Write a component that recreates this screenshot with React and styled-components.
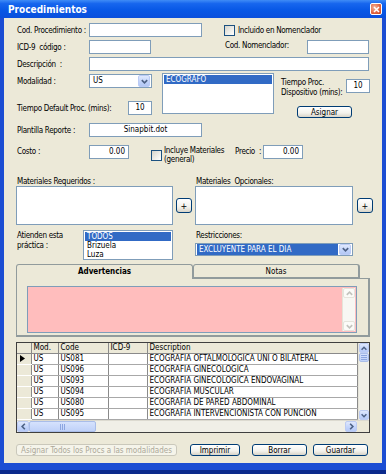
import React from "react";
import styled, { createGlobalStyle } from "styled-components";

const FONT = `"DejaVu Sans Condensed", "Liberation Sans", sans-serif`;

const GlobalStyle = createGlobalStyle`
  * { box-sizing: border-box; }
  html, body { margin: 0; padding: 0; background: #0b2a8c; }
  body { font-family: ${FONT}; font-size: 8px; color: #000; }
`;

const rows = [
  { mod: "US", code: "US081", icd: "", desc: "ECOGRAFIA OFTALMOLOGICA UNI O BILATERAL", current: true },
  { mod: "US", code: "US096", icd: "", desc: "ECOGRAFIA GINECOLOGICA" },
  { mod: "US", code: "US093", icd: "", desc: "ECOGRAFIA GINECOLOGICA ENDOVAGINAL" },
  { mod: "US", code: "US094", icd: "", desc: "ECOGRAFIA MUSCULAR" },
  { mod: "US", code: "US080", icd: "", desc: "ECOGRAFIA DE PARED ABDOMINAL" },
  { mod: "US", code: "US095", icd: "", desc: "ECOGRAFIA INTERVENCIONISTA CON PUNCION" },
];

function Chevron({ dir = "down", color = "#4d6185" }) {
  const d = {
    down: "M2 3.5 L5 6.5 L8 3.5",
    up: "M2 6.5 L5 3.5 L8 6.5",
    left: "M6.5 2 L3.5 5 L6.5 8",
    right: "M3.5 2 L6.5 5 L3.5 8",
  }[dir];
  return (
    <svg width="9" height="9" viewBox="0 0 10 10">
      <path d={d} fill="none" stroke={color} strokeWidth="1.8" />
    </svg>
  );
}

function Grip({ vertical }) {
  return vertical ? (
    <svg width="6" height="5" viewBox="0 0 6 5">
      <path d="M0 0.5 H6 M0 2.5 H6 M0 4.5 H6" stroke="#8ca5e0" strokeWidth="1" />
    </svg>
  ) : (
    <svg width="5" height="6" viewBox="0 0 5 6">
      <path d="M0.5 0 V6 M2.5 0 V6 M4.5 0 V6" stroke="#8ca5e0" strokeWidth="1" />
    </svg>
  );
}

function App() {
  return (
    <>
      <GlobalStyle />
      <Window>
        <TitleBar>
          <span>Procedimientos</span>
          <CloseBtn>
            <svg width="7" height="7" viewBox="0 0 7 7">
              <path d="M1 1 L6 6 M6 1 L1 6" stroke="#fff" strokeWidth="1.5" />
            </svg>
          </CloseBtn>
        </TitleBar>

        <Body>
          <Row>
            <Label $w={73}>Cod. Procedimiento :</Label>
            <Field $w={113} />
            <Check $ml={22} />
            <Label $ml={2}>Incluido en Nomenclador</Label>
          </Row>

          <Row $mt={3}>
            <Label $w={73}>ICD-9&nbsp; código :</Label>
            <Field $w={62} />
            <Label $w={83} $ml={73} $dy={-2}>Cod. Nomenclador:</Label>
            <Field $w={62} />
          </Row>

          <Row $mt={3}>
            <Label $w={73}>Descripción&nbsp; :</Label>
            <Field $w={280} />
          </Row>

          <Block>
            <LeftCol>
              <Row $mt={1}>
                <Label $w={73}>Modalidad :</Label>
                <Select $w={63}>
                  <span>US</span>
                  <DropBtn><Chevron /></DropBtn>
                </Select>
              </Row>
              <Row $mt={13}>
                <Label $w={112}>Tiempo Default Proc. (mins):</Label>
                <Field $w={24} $align="center">10</Field>
              </Row>
            </LeftCol>

            <ListBox $w={112} $h={41}>
              <ListItem $selected>ECOGRAFO</ListItem>
            </ListBox>

            <RightCol>
              <Row $align="flex-start" $mt={5}>
                <TwoLine $w={66}>Tiempo Proc.<br />Dispositivo (mins):</TwoLine>
                <Field $w={24} $align="center" $mt={1}>10</Field>
              </Row>
              <Button $w={55} $ml={17} $mt={8}>Asignar</Button>
            </RightCol>
          </Block>

          <Row $mt={5}>
            <Label $w={73}>Plantilla Reporte :</Label>
            <Field $w={113} $align="center">Sinapbit.dot</Field>
          </Row>

          <Row $mt={8} $align="flex-start">
            <Label $w={73} $h={14}>Costo :</Label>
            <Field $w={40} $align="right">0.00</Field>
            <Check $ml={22} $mt={5} />
            <TwoLine $w={71} $ml={1} $mt={1} $lh={9}>Incluye Materiales<br />(general)</TwoLine>
            <Label $w={29} $h={14}>Precio&nbsp; :</Label>
            <Field $w={40} $align="right">0.00</Field>
          </Row>

          <Row $mt={12} $h={10}>
            <Label $w={179}>Materiales Requeridos :</Label>
            <Label>Materiales&nbsp; Opcionales:</Label>
          </Row>

          <Row>
            <TextArea $w={157} $h={39} />
            <PlusButton $ml={3}>+</PlusButton>
            <TextArea $w={158} $h={39} $ml={3} />
            <PlusButton $ml={4}>+</PlusButton>
          </Row>

          <Row $mt={5} $align="flex-start">
            <TwoLine $w={67} $mt={1}>Atienden esta<br />práctica :</TwoLine>
            <ListBox $w={90} $h={30}>
              <ListItem $selected>TODOS</ListItem>
              <ListItem>Brizuela</ListItem>
              <ListItem>Luza</ListItem>
            </ListBox>
            <RestrictCol>
              <Label $h={11}>Restricciones:</Label>
              <Select $w={158} $h={13} $mt={2} $active>
                <span>EXCLUYENTE PARA EL DIA</span>
                <DropBtn $h={11}><Chevron /></DropBtn>
              </Select>
            </RestrictCol>
          </Row>

          <Tabs>
            <TabStrip>
              <Tab $w={177} $active>Advertencias</Tab>
              <Tab $w={167}>Notas</Tab>
            </TabStrip>
            <TabPanel>
              <PinkArea>
                <VScroll $disabled>
                  <ScrollBtn $disabled><Chevron dir="up" color="#c3c3bd" /></ScrollBtn>
                  <ScrollBtn $disabled><Chevron dir="down" color="#c3c3bd" /></ScrollBtn>
                </VScroll>
              </PinkArea>
            </TabPanel>
          </Tabs>

          <GridBox>
            <GridMain>
              <Table>
                <colgroup>
                  <col style={{ width: 14 }} />
                  <col style={{ width: 27 }} />
                  <col style={{ width: 50 }} />
                  <col style={{ width: 39 }} />
                  <col />
                </colgroup>
                <thead>
                  <tr>
                    <Th />
                    <Th>Mod.</Th>
                    <Th>Code</Th>
                    <Th>ICD-9</Th>
                    <Th>Description</Th>
                  </tr>
                </thead>
                <tbody>
                  {rows.map((r) => (
                    <tr key={r.code}>
                      <Indicator>
                        {r.current && (
                          <svg width="5" height="7" viewBox="0 0 5 7">
                            <path d="M0 0 L5 3.5 L0 7 Z" fill="#000" />
                          </svg>
                        )}
                      </Indicator>
                      <Td>{r.mod}</Td>
                      <Td>{r.code}</Td>
                      <Td>{r.icd}</Td>
                      <Td>{r.desc}</Td>
                    </tr>
                  ))}
                </tbody>
              </Table>
              <VScroll>
                <ScrollBtn><Chevron dir="up" /></ScrollBtn>
                <Thumb $v><Grip vertical /></Thumb>
                <Track />
                <ScrollBtn><Chevron dir="down" /></ScrollBtn>
              </VScroll>
            </GridMain>
            <HScroll>
              <ScrollBtn $h><Chevron dir="left" /></ScrollBtn>
              <Thumb $w={67}><Grip /></Thumb>
              <Track />
              <ScrollBtn $h><Chevron dir="right" /></ScrollBtn>
              <Corner />
            </HScroll>
          </GridBox>

          <Row $mt={11}>
            <Button $w={161} $disabled>Asignar Todos los Procs a las modalidades</Button>
            <Button $w={50} $ml={13}>Imprimir</Button>
            <Button $w={55} $ml={12}>Borrar</Button>
            <Button $w={55} $ml={6}>Guardar</Button>
          </Row>
        </Body>
      </Window>
    </>
  );
}

// ---- window frame ----
const Window = styled.div`
  width: 386px;
  height: 470px;
  display: flex;
  flex-direction: column;
`;

const TitleBar = styled.div`
  height: 18px;
  flex: none;
  display: flex;
  align-items: center;
  justify-content: space-between;
  padding: 0 4px 0 8px;
  color: #fff;
  font-weight: bold;
  font-size: 10px;
  background: linear-gradient(
    to bottom,
    #3f8cf6 0%,
    #1766ee 20%,
    #0858e6 55%,
    #0a4fdc 100%
  );
`;

const CloseBtn = styled.div`
  width: 12px;
  height: 12px;
  border: 1px solid #fff;
  border-radius: 2px;
  display: flex;
  align-items: center;
  justify-content: center;
  background: radial-gradient(circle at 35% 35%, #f3b49c, #e0633f 60%, #c64420);
`;

const Body = styled.div`
  flex: 1;
  display: flex;
  flex-direction: column;
  padding: 5px 0 0 12px;
  background: #ece9d8;
  border: solid #1b4dd3;
  border-width: 0 4px 7px 4px;
`;

// ---- generic form parts ----
const Row = styled.div`
  display: flex;
  align-items: ${(p) => p.$align || "center"};
  margin-top: ${(p) => p.$mt || 0}px;
  height: ${(p) => (p.$h ? `${p.$h}px` : "auto")};
`;

const Label = styled.span`
  flex: none;
  width: ${(p) => (p.$w ? `${p.$w}px` : "auto")};
  height: ${(p) => (p.$h ? `${p.$h}px` : "auto")};
  line-height: ${(p) => (p.$h ? `${p.$h}px` : "normal")};
  margin-left: ${(p) => p.$ml || 0}px;
  padding-left: 1px;
  letter-spacing: -0.3px;
  position: relative;
  top: ${(p) => p.$dy || 0}px;
  white-space: nowrap;
`;

const TwoLine = styled.div`
  flex: none;
  width: ${(p) => p.$w}px;
  margin-left: ${(p) => p.$ml || 0}px;
  margin-top: ${(p) => p.$mt || 0}px;
  padding-left: 1px;
  letter-spacing: -0.3px;
  line-height: ${(p) => p.$lh || 10}px;
  white-space: nowrap;
`;

const Field = styled.div`
  flex: none;
  width: ${(p) => p.$w}px;
  height: 14px;
  margin-top: ${(p) => p.$mt || 0}px;
  padding: 0 3px;
  line-height: 12px;
  text-align: ${(p) => p.$align || "left"};
  background: #fff;
  border: 1px solid #7f9db9;
`;

const Check = styled.div`
  flex: none;
  width: 11px;
  height: 11px;
  margin-left: ${(p) => p.$ml || 0}px;
  margin-top: ${(p) => p.$mt || 0}px;
  border: 1px solid #1c5180;
  background: linear-gradient(135deg, #d6d4cb, #f4f4f0 70%, #fff);
`;

const Select = styled.div`
  flex: none;
  display: flex;
  align-items: center;
  justify-content: space-between;
  width: ${(p) => p.$w}px;
  height: ${(p) => p.$h || 14}px;
  margin-top: ${(p) => p.$mt || 0}px;
  padding: 0 1px 0 3px;
  background: #fff;
  border: 1px solid #7f9db9;

  span {
    flex: 1;
    height: 100%;
    line-height: ${(p) => (p.$h || 14) - 2}px;
    margin-left: ${(p) => (p.$active ? "-2px" : 0)};
    padding-left: ${(p) => (p.$active ? "2px" : 0)};
    background: ${(p) => (p.$active ? "#316ac5" : "transparent")};
    color: ${(p) => (p.$active ? "#fff" : "#000")};
  }
`;

const DropBtn = styled.div`
  flex: none;
  width: 12px;
  height: ${(p) => p.$h || 12}px;
  margin-left: 1px;
  display: flex;
  align-items: center;
  justify-content: center;
  border: 1px solid #bbcbf5;
  border-radius: 2px;
  background: linear-gradient(to bottom, #e0e9fd, #c0d2f9 60%, #b3c7f4);
`;

const ListBox = styled.div`
  flex: none;
  width: ${(p) => p.$w}px;
  height: ${(p) => p.$h}px;
  padding: 1px;
  background: #fff;
  border: 1px solid #7f9db9;
`;

const ListItem = styled.div`
  height: 9px;
  line-height: 9px;
  padding-left: 2px;
  background: ${(p) => (p.$selected ? "#316ac5" : "transparent")};
  color: ${(p) => (p.$selected ? "#fff" : "#000")};
`;

const TextArea = styled.div`
  flex: none;
  width: ${(p) => p.$w}px;
  height: ${(p) => p.$h}px;
  margin-left: ${(p) => p.$ml || 0}px;
  background: #fff;
  border: 1px solid #7f9db9;
`;

const Button = styled.div`
  flex: none;
  width: ${(p) => p.$w}px;
  height: 12px;
  margin-left: ${(p) => p.$ml || 0}px;
  margin-top: ${(p) => p.$mt || 0}px;
  display: flex;
  align-items: center;
  justify-content: center;
  white-space: nowrap;
  border-radius: 3px;
  border: 1px solid ${(p) => (p.$disabled ? "#cac8bb" : "#003c74")};
  color: ${(p) => (p.$disabled ? "#aca899" : "#000")};
  background: ${(p) =>
    p.$disabled
      ? "#f5f4ea"
      : "linear-gradient(to bottom, #ffffff, #f3f2ec 60%, #d8d4c8)"};
`;

const PlusButton = styled(Button)`
  width: 16px;
  height: 15px;
  font-size: 9px;
`;

// ---- composite blocks ----
const Block = styled.div`
  display: flex;
  align-items: flex-start;
  margin-top: 2px;
`;

const LeftCol = styled.div`
  flex: none;
  width: 136px;
  margin-right: 10px;
  display: flex;
  flex-direction: column;
`;

const RightCol = styled.div`
  flex: none;
  width: 90px;
  margin-left: 6px;
  display: flex;
  flex-direction: column;
`;

const RestrictCol = styled.div`
  display: flex;
  flex-direction: column;
  margin-left: 22px;
`;

// ---- tabs ----
const Tabs = styled.div`
  width: 354px;
  margin-top: 4px;
  display: flex;
  flex-direction: column;
`;

const TabStrip = styled.div`
  display: flex;
  align-items: flex-end;
  height: 14px;
`;

const Tab = styled.div`
  flex: none;
  width: ${(p) => p.$w}px;
  height: ${(p) => (p.$active ? 15 : 14)}px;
  margin-bottom: ${(p) => (p.$active ? -1 : 0)}px;
  position: relative;
  z-index: ${(p) => (p.$active ? 1 : 0)};
  display: flex;
  align-items: center;
  justify-content: center;
  font-weight: ${(p) => (p.$active ? "bold" : "normal")};
  background: #ece9d8;
  border: 1px solid #919b9c;
  border-bottom: ${(p) => (p.$active ? "none" : "1px solid #919b9c")};
  border-right-width: ${(p) => (p.$active ? 1 : 2)}px;
  border-radius: 3px 3px 0 0;
  padding-bottom: ${(p) => (p.$active ? 1 : 0)}px;
`;

const TabPanel = styled.div`
  height: 59px;
  padding: 7px 11px 0 10px;
  border: 1px solid #919b9c;
  border-right-width: 2px;
  border-bottom-width: 2px;
  background: #ece9d8;
`;

const PinkArea = styled.div`
  height: 47px;
  display: flex;
  justify-content: flex-end;
  padding: 1px;
  background: #ffbdbd;
  border: 1px solid #7f9db9;
`;

// ---- data grid ----
const GridBox = styled.div`
  width: 354px;
  height: 91px;
  margin-top: 5px;
  display: flex;
  flex-direction: column;
  background: #fff;
  border: 1px solid #3f3f3f;
`;

const GridMain = styled.div`
  flex: 1;
  display: flex;
  overflow: hidden;
`;

const Table = styled.table`
  width: 341px;
  flex: none;
  table-layout: fixed;
  border-collapse: collapse;
  align-self: flex-start;
`;

const Th = styled.th`
  height: 10px;
  padding: 0 0 0 2px;
  font-weight: normal;
  text-align: left;
  line-height: 9px;
  background: #ece9d8;
  border-right: 1px solid #8a8a8a;
  border-bottom: 1px solid #8a8a8a;
`;

const Td = styled.td`
  height: 11px;
  padding: 0 0 0 2px;
  line-height: 10px;
  white-space: nowrap;
  overflow: hidden;
  border-right: 1px solid #8a8a8a;
  border-bottom: 1px solid #a8a8a8;
`;

const Indicator = styled.td`
  height: 11px;
  padding: 0 0 0 3px;
  background: #ece9d8;
  border-right: 1px solid #8a8a8a;
  border-bottom: 1px solid #fff;
  border-top: 1px solid #d6d2c2;

  svg {
    display: block;
  }
`;

const VScroll = styled.div`
  flex: none;
  width: ${(p) => (p.$disabled ? 13 : 11)}px;
  display: flex;
  flex-direction: column;
  justify-content: ${(p) => (p.$disabled ? "space-between" : "flex-start")};
  background: ${(p) => (p.$disabled ? "#f7f7f3" : "#f0efe7")};
  border-left: 1px solid #e6e4d8;
`;

const HScroll = styled.div`
  flex: none;
  height: 12px;
  display: flex;
  background: #f0efe7;
  border-top: 1px solid #dcdad0;
`;

const ScrollBtn = styled.div`
  flex: none;
  height: ${(p) => (p.$h ? "auto" : "10px")};
  ${(p) => (p.$h ? "width: 12px;" : "")}
  display: flex;
  align-items: center;
  justify-content: center;
  border-radius: 2px;
  border: 1px solid ${(p) => (p.$disabled ? "#e5e4dc" : "#bccbf2")};
  background: ${(p) =>
    p.$disabled
      ? "#fbfbf8"
      : "linear-gradient(to bottom, #dfe8fd, #c1d3fb 60%, #b6c9f6)"};
`;

const Thumb = styled.div`
  flex: none;
  ${(p) => (p.$v ? "height: 9px;" : `width: ${p.$w}px;`)}
  display: flex;
  align-items: center;
  justify-content: center;
  border-radius: 2px;
  border: 1px solid #a9bde9;
  background: linear-gradient(to bottom, #d6e2fd, #bfd1f8);
`;

const Track = styled.div`
  flex: 1;
`;

const Corner = styled.div`
  flex: none;
  width: 12px;
  background: #ece9d8;
`;

export default App;
